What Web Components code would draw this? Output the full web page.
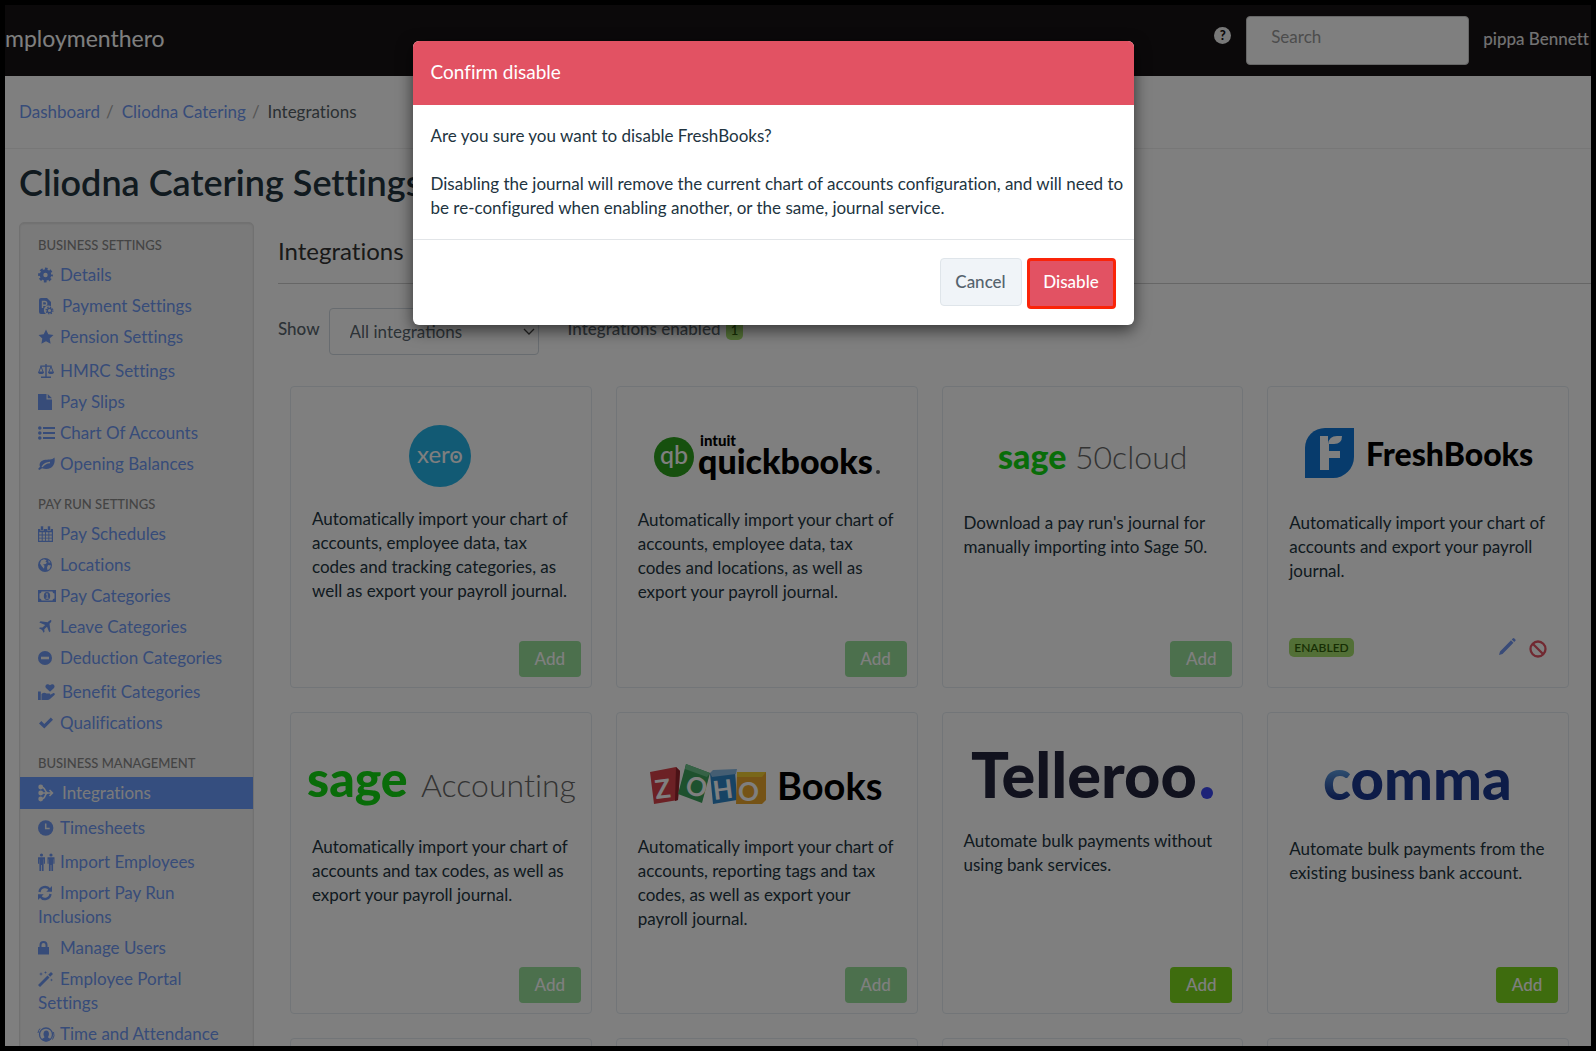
<!DOCTYPE html>
<html lang="en">
<head>
<meta charset="utf-8">
<title>Cliodna Catering Settings</title>
<style>
    html, body {
        height: 100%;
    }
    body {
        margin: 0;
        background: #000;
        overflow: hidden;
        font: 17px/24px Lato, "Liberation Sans", sans-serif;
        font-variant-ligatures: none;
        color: #22343f;
    }
</style>
</head>
<body>
<eh-shell>
    <eh-header slot="header" user="pippa Bennett"></eh-header>
    <eh-breadcrumb slot="breadcrumb">
        <a href="#dashboard">Dashboard</a>
        <a href="#business">Cliodna Catering</a>
        <span>Integrations</span>
    </eh-breadcrumb>
    <span slot="title">Cliodna Catering Settings</span>

    <eh-nav slot="nav">
        <eh-nav-group label="BUSINESS SETTINGS">
            <eh-nav-item icon="gear">Details</eh-nav-item>
            <eh-nav-item icon="payment" wide>Payment Settings</eh-nav-item>
            <eh-nav-item icon="star">Pension Settings</eh-nav-item>
            <eh-nav-item icon="scales" tall>HMRC Settings</eh-nav-item>
            <eh-nav-item icon="file">Pay Slips</eh-nav-item>
            <eh-nav-item icon="list">Chart Of Accounts</eh-nav-item>
            <eh-nav-item icon="leaf">Opening Balances</eh-nav-item>
        </eh-nav-group>
        <eh-nav-group label="PAY RUN SETTINGS">
            <eh-nav-item icon="calendar">Pay Schedules</eh-nav-item>
            <eh-nav-item icon="globe">Locations</eh-nav-item>
            <eh-nav-item icon="money">Pay Categories</eh-nav-item>
            <eh-nav-item icon="plane">Leave Categories</eh-nav-item>
            <eh-nav-item icon="minus">Deduction Categories</eh-nav-item>
            <eh-nav-item icon="benefit" wide tall>Benefit Categories</eh-nav-item>
            <eh-nav-item icon="check">Qualifications</eh-nav-item>
        </eh-nav-group>
        <eh-nav-group label="BUSINESS MANAGEMENT">
            <eh-nav-item icon="merge" wide active>Integrations</eh-nav-item>
            <eh-nav-item icon="clock" tall>Timesheets</eh-nav-item>
            <eh-nav-item icon="people" tall>Import Employees</eh-nav-item>
            <eh-nav-item icon="refresh">Import Pay Run Inclusions</eh-nav-item>
            <eh-nav-item icon="lock">Manage Users</eh-nav-item>
            <eh-nav-item icon="wand">Employee Portal Settings</eh-nav-item>
            <eh-nav-item icon="attendance">Time and Attendance</eh-nav-item>
        </eh-nav-group>
    </eh-nav>

    <eh-integrations enabled="1">
        <eh-card logo="xero" add="disabled">Automatically import your chart of accounts, employee data, tax codes and tracking categories, as well as export your payroll journal.</eh-card>
        <eh-card logo="quickbooks" add="disabled">Automatically import your chart of accounts, employee data, tax codes and locations, as well as export your payroll journal.</eh-card>
        <eh-card logo="sage50" add="disabled">Download a pay run's journal for manually importing into Sage 50.</eh-card>
        <eh-card logo="freshbooks">Automatically import your chart of accounts and export your payroll journal.</eh-card>
        <eh-card logo="sage" add="disabled">Automatically import your chart of accounts and tax codes, as well as export your payroll journal.</eh-card>
        <eh-card logo="zoho" add="disabled">Automatically import your chart of accounts, reporting tags and tax codes, as well as export your payroll journal.</eh-card>
        <eh-card logo="telleroo" add="on">Automate bulk payments without using bank services.</eh-card>
        <eh-card logo="comma" add="on">Automate bulk payments from the existing business bank account.</eh-card>
        <eh-card></eh-card>
        <eh-card></eh-card>
        <eh-card></eh-card>
        <eh-card></eh-card>
    </eh-integrations>

    <eh-modal slot="modal" heading="Confirm disable">
        <p>Are you sure you want to disable FreshBooks?</p>
        <p>Disabling the journal will remove the current chart of accounts configuration, and will need to be re-configured when enabling another, or the same, journal service.</p>
    </eh-modal>
</eh-shell>

<script>
// drawn on an 18x18 box, painted with the current text colour
const ICONS = {
    gear: `<circle cx="7.5" cy="8" r="4" fill="none" stroke="currentColor" stroke-width="3.6"/>
        <circle cx="7.5" cy="8" r="6.2" fill="none" stroke="currentColor" stroke-width="2.4" stroke-dasharray="2.7 2.17" stroke-dashoffset="1.35"/>`,
    payment: `<path d="M3 0h6l4 4v4.2a4.4 4.4 0 0 0-5 7.8H3a2 2 0 0 1-2-2V2a2 2 0 0 1 2-2z"/>
        <path d="M4.5 10V3.5h2.3a1.9 1.9 0 0 1 0 3.8H4.5" fill="none" stroke="#f5f5f5" stroke-width="1.4"/>
        <circle cx="11.5" cy="12.5" r="2.2" fill="none" stroke="currentColor" stroke-width="1.3"/>
        <circle cx="11.5" cy="12.5" r="3.4" fill="none" stroke="currentColor" stroke-width="1.2" stroke-dasharray="1.4 1.27"/>`,
    star: `<path d="M8 .5l2.3 4.8 5.2.7-3.8 3.6.9 5.2L8 12.3l-4.6 2.5.9-5.2L.5 6l5.2-.7z"/>`,
    scales: `<path d="M7.3 1h1.4v1.5h5V3.800H8.700v9.600H13V15H3v-1.600h4.300V3.800h-5V2.500h5z"/>
        <path d="M3 3.500L.8 9h4.400zM13 3.500L10.800 9h4.400z" fill="none" stroke="currentColor"/>
        <path d="M0 9h6a3 2 0 0 1-6 0zM10 9h6a3 2 0 0 1-6 0z"/>`,
    file: `<path d="M0 0h8.500v5.500H14V16H0zM9.700 0L14 4.300H9.700z"/>`,
    list: `<circle cx="1.800" cy="3" r="1.800"/><circle cx="1.800" cy="8" r="1.800"/><circle cx="1.800" cy="13" r="1.800"/>
        <path d="M5 2h12v2H5zM5 7h12v2H5zM5 12h12v2H5z"/>`,
    leaf: `<path d="M16.500 1.500c.8 4.500-.5 8.500-4 10.500-3 1.600-6 1.200-8.500.3L1.500 14 0 13l2-2.300C.8 7.500 2.500 4.800 6 4c4-.8 8 .2 10.500-2.500z"/>
        <path d="M4 11c2-3 4.500-4.300 8-4.500" fill="none" stroke="#f5f5f5" stroke-width="1.300"/>`,
    calendar: `<path d="M0 3h15v13H0z"/><path d="M2.500 0h3v4.500h-3zM9.500 0h3v4.500h-3z" stroke="#f5f5f5" stroke-width=".6"/>
        <path d="M1.200 6.200h2.500v2.300H1.200zM4.700 6.200h2.400v2.300H4.700zM8 6.200h2.400v2.300H8zM11.300 6.200h2.500v2.300h-2.500zM1.200 9.400h2.500v2.300H1.200zM4.700 9.400h2.400v2.300H4.700zM8 9.400h2.400v2.300H8zM11.300 9.400h2.500v2.300h-2.500zM1.200 12.600h2.500v2.200H1.200zM4.700 12.600h2.400v2.200H4.700zM8 12.600h2.400v2.200H8zM11.300 12.600h2.500v2.200h-2.500z" fill="#f5f5f5"/>`,
    globe: `<circle cx="7" cy="8" r="7"/>
        <path d="M3 3.500l3-1.300 2.500 1-1 1.600 1.500 1L7.500 7 5 7.500l1.500 1.300-.5 3-2-2.300-2-3zM10 8l3 .5-1.500 3.500-2 1.300L9 10.500zM10.500 3l2 2.500h-2z" fill="#f5f5f5"/>`,
    money: `<path d="M0 2h18v12H0z"/><path d="M3.500 3.500h11a2 2 0 0 0 2 2v5a2 2 0 0 0-2 2h-11a2 2 0 0 0-2-2v-5a2 2 0 0 0 2-2z" fill="#f5f5f5"/>
        <ellipse cx="9" cy="8" rx="3.200" ry="3.900"/><path d="M8 6.500l1.200-1v4.300M7.800 10.200h2.800" fill="none" stroke="#f5f5f5"/>`,
    plane: `<path d="M13.200 1.200c.6.900-.3 2.300-1.700 3.600l1 7.400-1.300 1L9 7.700 6.300 10.300l.2 2.500-.9.900-1.500-2.800L1 9.300l.9-.9 2.600.2L7.200 6 1.300 3.500l1.200-1.200 7.300 1c1.300-1.500 2.700-2.600 3.400-2.100z"/>`,
    minus: `<circle cx="7" cy="8" r="7"/><path d="M3 6.700h8v2.600H3z" fill="#f5f5f5"/>`,
    benefit: `<path d="M0 7.500h2.800V16H0zM3.500 10c1.500-1.300 3.500-1.500 5-.5h3c1 0 1 1.700 0 1.800H8.500h3l3.500-2c1.300-.7 2.500.8 1.500 1.800L12 15c-.8.700-1.500 1-2.500 1h-6z"/>
        <path d="M12 7.800L8 3.900C6 1.500 9.500-1.300 12 1.300c2.500-2.600 6 .2 4 2.600z"/>`,
    check: `<path d="M1 8.500L3.300 6l3 3L12.800 2.400 15 4.700 6.300 13.500z"/>`,
    merge: `<circle cx="2.700" cy="2" r="2.400"/><circle cx="2.700" cy="8" r="2.400"/><circle cx="2.700" cy="14" r="2.400"/>
        <path d="M3 2c5.500 0 3 6 7 6M3 14c5.500 0 3-6 7-6M3 8h11M11.500 5l3 3-3 3" fill="none" stroke="currentColor" stroke-width="1.500"/>`,
    clock: `<circle cx="7.700" cy="8" r="7.700"/><path d="M7.700 3.500V8.500h4" fill="none" stroke="#f5f5f5" stroke-width="1.500"/>`,
    people: `<circle cx="3.500" cy="1" r="1.600"/><circle cx="13" cy="1" r="1.600"/>
        <path d="M0 3.300h7v6.500H5.900V5.300h-.3V17H3.900v-6h-.8v6H1.400V5.300h-.3V9.800H0zM9.500 3.300h7v6.500h-1.100V5.300h-.3V17h-1.700v-6h-.8v6h-1.700V5.300h-.3V9.800H9.500z"/>`,
    refresh: `<path d="M1.500 7A5.600 5.600 0 0 1 11.700 4.500M12.500 9A5.600 5.600 0 0 1 2.300 11.500" fill="none" stroke="currentColor" stroke-width="2.300"/>
        <path d="M14 1v5.700H8.300zM0 15V9.300h5.700z"/>`,
    lock: `<path d="M0 7h11v7.500H0z"/><path d="M2.500 7.500V5a3 3 0 0 1 6 0v2.500" fill="none" stroke="currentColor" stroke-width="2"/>`,
    wand: `<path d="M0 14L9.500 4.500l2 2L2 16zM10.200 3.800L13 1l2 2-2.800 2.800z"/>
        <path d="M3 1l.5 1.500L5 3l-1.500.5L3 5l-.5-1.500L1 3l1.500-.5zM7.500 0l.4 1.100L9 1.500l-1.100.4L7.500 3l-.4-1.100L6 1.500l1.100-.4zM13.500 7.500l.4 1.100 1.100.4-1.100.4-.4 1.100-.4-1.100L12 9l1.100-.4z"/>`,
    attendance: `<circle cx="8" cy="8.500" r="6.500" fill="none" stroke="currentColor" stroke-width="1.300"/>
        <path d="M3.500 13.500c.5-1.500 3-1.200 3-2.500C5 9.500 5 4.500 8.300 4.500S11.500 9.500 10 11c0 1.300 2.500 1 3 2.500A6.500 6.500 0 0 1 3.500 13.500z"/>
        <path d="M0 7a8 8 0 0 1 2-4.500M15.500 6a8 8 0 0 1-1 7.500" fill="none" stroke="currentColor"/>`
};

// each logo: [height, markup], 258 wide
const LOGOS = {
    xero: [99, `<circle cx="128" cy="48" r="31" fill="#25b4e8"/>
        <text x="105" y="55" font-size="24" fill="#fff">xero</text><circle cx="144" cy="49" r="2" fill="#fff"/>`],
    quickbooks: [100, `<circle cx="36" cy="49" r="20" fill="#2ca01c"/>
        <text x="22" y="56" font-size="25" font-weight="500" fill="#fff">qb</text>
        <text x="62" y="38" font-size="15" font-weight="900">intuit</text>
        <text x="60" y="66" font-size="34" font-weight="900">quickbooks</text><circle cx="240" cy="64" r="2" fill="#555"/>`],
    sage50: [103, `<text x="34" y="61" font-size="34" font-weight="900" fill="#12d912">sage</text>
        <text x="111" y="61" font-size="32" font-weight="300" fill="#666">50cloud</text>`],
    freshbooks: [103, `<path d="M36 20h29v29a21 21 0 0 1-21 21H16V40a20 20 0 0 1 20-20z" fill="#0e76d8"/>
        <path d="M31 28h8v8q1-8 9-8h5q0 8-8 8h-5v7h11v7H40v12h-9z" fill="#fff"/>
        <text x="77" y="58" font-size="32" font-weight="900">FreshBooks</text>`],
    sage: [101, `<text x="-5" y="63" font-size="50" font-weight="900" fill="#12d912">sage</text>
        <text x="109" y="63" font-size="32" font-weight="300" fill="#666">Accounting</text>`],
    zoho: [101, `<path d="M12 38l26-5 4 4-2 29-24 4z" fill="#d8434a"/><path d="M38 33l4 4-2 29-3 1z" fill="#96242c"/>
        <path d="M48 30l24 9-8 30-24-9z" fill="#3da25d"/><path d="M48 30l24 9-3 4-22-8z" fill="#6cc58c"/>
        <path d="M72 39l25-3 2 30-24 4z" fill="#2e86c8"/><path d="M72 39l3-3 24-1-1 5-24 3z" fill="#8abce6"/>
        <path d="M99 38h29v28l-4 4H98z" fill="#eba62c"/><path d="M99 38h29l-4 5H99z" fill="#f2cf32"/>
        <g fill="#fff" font-size="26" font-weight="700"><text transform="rotate(-7 18 64)" x="18" y="65">Z</text><text transform="rotate(15 46 59)" x="46" y="59">O</text><text transform="rotate(-7 75 66)" x="76" y="66">H</text><text x="100" y="67">O</text></g>
        <text x="139" y="66" font-size="38" font-weight="700">Books</text>`],
    telleroo: [95, `<text x="7" y="64" font-size="63" font-weight="900" fill="#22243c">Telleroo</text><circle cx="243" cy="59" r="6" fill="#3a46f0"/>`],
    comma: [103, `<linearGradient id="c" x1="0" y1="0" x2="0" y2="1"><stop offset=".4" stop-color="#5a98dc"/><stop offset=".8" stop-color="#1a3890"/></linearGradient>
        <text x="34" y="66" font-size="58" font-weight="900" fill="#1a3890"><tspan fill="url(#c)">c</tspan>omma</text>`]
};

function icon(name, size = 18) {
    return `<svg width="${size}" height="${size}" viewBox="0 0 18 18" fill="currentColor" aria-hidden="true">${ICONS[name] || ''}</svg>`;
}

/** Shared base: renders once into an open shadow root */
class EhElement extends HTMLElement {
    connectedCallback() {
        if (this.shadowRoot) {
            return;
        }
        const template = document.createElement('template');
        template.innerHTML = this.render();
        this.attachShadow({ mode: 'open' });
        this.shadowRoot.appendChild(template.content.cloneNode(true));
    }
}

class Shell extends EhElement {
    render() {
        return `
            <style>
                :host {
                    display: block;
                    box-sizing: border-box;
                    height: 100vh;
                    border: 5px solid #000;
                    position: relative;
                    overflow: hidden;
                    background: #fff;
                }
                h1 {
                    margin: 11px 14px 18px;
                    font-size: 36px;
                    line-height: 44px;
                    font-weight: 600;
                }
                .columns {
                    display: grid;
                    grid-template-columns: 235px 1fr;
                    gap: 24px;
                    padding-left: 14px;
                }
            </style>
            <slot name="header"></slot>
            <slot name="breadcrumb"></slot>
            <h1><slot name="title"></slot></h1>
            <div class="columns">
                <slot name="nav"></slot>
                <main><slot></slot></main>
            </div>
            <slot name="modal"></slot>`;
    }
}

class Header extends EhElement {
    render() {
        return `
            <style>
                :host {
                    display: flex;
                    align-items: center;
                    height: 71px;
                    background: #161215;
                    color: #f0f0f0;
                }
                .brand {
                    flex: 1;
                    color: #fff;
                    font-size: 23px;
                    line-height: 32px;
                    padding-bottom: 6px;
                }
                .help {
                    width: 17px;
                    height: 17px;
                    padding: 0;
                    margin: 0 15px 10px;
                    border: 0;
                    border-radius: 50%;
                    background: #f0f0f0;
                    color: #161215;
                    font: 900 13px/17px Lato, sans-serif;
                }
                input {
                    box-sizing: border-box;
                    width: 223px;
                    height: 49px;
                    padding: 0 24px 8px;
                    border: 1px solid #ccc;
                    border-radius: 4px;
                    background: #fff;
                    font: 17px/24px Lato, sans-serif;
                }
                input::placeholder {
                    color: #999;
                }
                .user {
                    margin: 0 2px 4px 14px;
                    color: #e4e4e4;
                    text-decoration: none;
                    font-weight: 500;
                }
            </style>
            <div class="brand">mploymenthero</div>
            <button class="help" aria-label="Help">?</button>
            <input type="search" placeholder="Search" aria-label="Search">
            <a class="user" href="#account">${this.getAttribute('user')}</a>`;
    }
}

class Breadcrumb extends EhElement {
    render() {
        return `
            <style>
                :host {
                    display: flex;
                    padding: 24px 14px;
                    border-bottom: 1px solid #eee;
                }
                ::slotted(a) {
                    color: #6f98f2;
                    text-decoration: none;
                }
                ::slotted(a)::after {
                    content: "/";
                    color: #aaa;
                    padding: 0 8px 0 6px;
                }
                ::slotted(span) {
                    color: #555f66;
                }
            </style>
            <slot></slot>`;
    }
}

class Nav extends EhElement {
    render() {
        return `
            <style>
                :host {
                    display: block;
                    padding: 10px 0 30px;
                    background: #f5f5f5;
                    border: 1px solid #e3e3e3;
                    border-radius: 5px;
                    box-shadow: inset 0 1px 2px #ddd;
                }
            </style>
            <nav><slot></slot></nav>`;
    }
}

class NavGroup extends EhElement {
    render() {
        return `
            <style>
                :host {
                    display: block;
                    padding-bottom: 13px;
                }
                h3 {
                    margin: 0;
                    padding: 0 18px 2px;
                    font-size: 13px;
                    line-height: 24px;
                    font-weight: 500;
                    color: #888;
                }
            </style>
            <h3>${this.getAttribute('label')}</h3>
            <slot></slot>`;
    }
}

class NavItem extends EhElement {
    render() {
        return `
            <style>
                :host {
                    display: block;
                }
                :host([tall]) {
                    padding-top: 3px;
                }
                a {
                    display: block;
                    padding: 4px 18px 3px;
                    color: #6f98f2;
                    text-decoration: none;
                }
                svg {
                    display: inline-block;
                    vertical-align: -4px;
                    margin-right: 4px;
                    overflow: visible;
                }
                :host([wide]) svg {
                    margin-right: 6px;
                }
                :host([active]) a {
                    padding-bottom: 4px;
                    background: #6a9cff;
                    color: #f5f5f5;
                }
            </style>
            <a href="#${this.getAttribute('icon')}">${icon(this.getAttribute('icon'))}<slot></slot></a>`;
    }
}

class Integrations extends EhElement {
    render() {
        return `
            <style>
                :host {
                    display: block;
                }
                h2 {
                    margin: 0;
                    padding: 14px 0 17px;
                    border-bottom: 1px solid #ccc;
                    font-size: 24px;
                    line-height: 30px;
                    font-weight: 400;
                    color: #333;
                }
                .filter {
                    display: flex;
                    align-items: flex-start;
                    padding: 24px 0 31px;
                    color: #5a666e;
                }
                .filter > * {
                    font-weight: 500;
                }
                label, .enabled {
                    padding-top: 9px;
                }
                .select {
                    display: grid;
                    align-items: center;
                    width: 210px;
                    margin: 0 29px 0 9px;
                }
                select {
                    grid-area: 1 / 1;
                    appearance: none;
                    box-sizing: border-box;
                    width: 100%;
                    height: 47px;
                    padding: 0 20px;
                    border: 1px solid #d0d8e0;
                    border-radius: 4px;
                    background: #fff;
                    color: #5a666e;
                    font: 17px/24px Lato, sans-serif;
                }
                .select svg {
                    grid-area: 1 / 1;
                    justify-self: end;
                    margin-right: 4px;
                    pointer-events: none;
                }
                .badge {
                    display: inline-block;
                    margin-left: 1px;
                    padding: 0 5px;
                    border-radius: 5px;
                    background: #a5df6c;
                    color: #2e5c08;
                    font-size: 13px;
                    line-height: 20px;
                    font-weight: 600;
                }
                .cards {
                    display: grid;
                    grid-template-columns: repeat(4, 1fr);
                    gap: 24px;
                    padding: 0 22px 0 12px;
                }
            </style>
            <h2>Integrations</h2>
            <div class="filter">
                <label for="show">Show</label>
                <div class="select">
                    <select id="show"><option>All integrations</option></select>
                    <svg width="12" height="8" viewBox="0 0 12 8" fill="none" stroke="#444" stroke-width="1.3"><path d="M1 1l5 5 5-5"/></svg>
                </div>
                <div class="enabled">Integrations enabled <span class="badge">${this.getAttribute('enabled')}</span></div>
            </div>
            <div class="cards"><slot></slot></div>`;
    }
}

class Card extends EhElement {
    render() {
        const [height, art] = LOGOS[this.getAttribute('logo')] || [99, ''];
        const add = this.getAttribute('add');
        let actions = '';
        if (add) {
            actions = `<button class="add" ${add === 'disabled' ? 'disabled' : ''}>Add</button>`;
        } else if (art) {
            actions = `
                <span class="status">ENABLED</span>
                <button class="tool edit" aria-label="Edit"><svg width="18" height="18" viewBox="0 0 18 18" fill="#7397f0"><path d="M1 17l1-3.500L13 2.200l2.500 2.500L4.500 16zM13.700 1.500l1-1a1.200 1.200 0 0 1 1.700 0l.8.8a1.200 1.200 0 0 1 0 1.700l-1 1z"/></svg></button>
                <button class="tool" aria-label="Disable"><svg width="18" height="18" viewBox="0 0 18 18" fill="none" stroke="#e25263" stroke-width="2.300"><circle cx="9" cy="9" r="7.500"/><path d="M4 4l10 10"/></svg></button>`;
        }
        return `
            <style>
                :host {
                    display: flex;
                    flex-direction: column;
                    box-sizing: border-box;
                    aspect-ratio: 1;
                    padding: 21px 10px 10px 21px;
                    border: 1px solid #e4ebf1;
                    border-radius: 4px;
                    background: #fff;
                }
                .logo {
                    flex: none;
                    overflow: visible;
                    font-family: Lato, sans-serif;
                }
                .text {
                    flex: 1;
                    padding-right: 8px;
                }
                .actions {
                    display: flex;
                    align-items: center;
                    justify-content: flex-end;
                }
                .add {
                    width: 62px;
                    height: 36px;
                    padding: 0;
                    border: 0;
                    border-radius: 4px;
                    background: #7cd81c;
                    color: #fff;
                    font: 500 17px/24px Lato, sans-serif;
                }
                .add[disabled] {
                    background: #98e09a;
                }
                .status {
                    margin: 0 auto 20px 0;
                    padding: 0 5px;
                    border-radius: 5px;
                    background: #a5df6c;
                    color: #2e5c08;
                    font-size: 12px;
                    line-height: 19px;
                    font-weight: 600;
                }
                .tool {
                    height: 18px;
                    margin: 0 11px 16px 0;
                    padding: 0;
                    border: 0;
                    background: none;
                }
                .edit {
                    margin: 0 13px 20px 0;
                }
            </style>
            <svg class="logo" width="258" height="${height}" viewBox="0 0 258 ${height}">${art}</svg>
            <div class="text"><slot></slot></div>
            <div class="actions">${actions}</div>`;
    }
}

class Modal extends EhElement {
    render() {
        return `
            <style>
                :host {
                    position: absolute;
                    inset: 0;
                    display: flex;
                    justify-content: center;
                    align-items: flex-start;
                    padding: 36px 50px 0 0;
                    background: rgba(0, 0, 0, .5);
                }
                section {
                    width: 721px;
                    overflow: hidden;
                    border-radius: 6px;
                    background: #fff;
                    box-shadow: 0 5px 16px rgba(0, 0, 0, .6);
                }
                h2 {
                    margin: 0;
                    padding: 19px 18px 21px;
                    background: #e25263;
                    color: #fff;
                    font-size: 19px;
                    line-height: 24px;
                    font-weight: 400;
                }
                .body {
                    display: grid;
                    gap: 24px;
                    padding: 19px 4px 19px 18px;
                    border-bottom: 1px solid #e2e5e8;
                }
                ::slotted(p) {
                    margin: 0;
                }
                footer {
                    display: flex;
                    justify-content: flex-end;
                    align-items: flex-start;
                    gap: 5px;
                    padding: 18px 18px 16px;
                }
                button {
                    box-sizing: border-box;
                    width: 82px;
                    height: 48px;
                    padding: 0;
                    border: 1px solid #dfe5ea;
                    border-radius: 4px;
                    background: #f0f4f8;
                    color: #55636d;
                    font: 500 17px/24px Lato, sans-serif;
                }
                .danger {
                    width: 89px;
                    height: 51px;
                    padding-bottom: 3px;
                    border: 3px solid #fa2409;
                    background: #e25263;
                    color: #fff;
                }
            </style>
            <section role="dialog" aria-labelledby="heading">
                <h2 id="heading">${this.getAttribute('heading')}</h2>
                <div class="body"><slot></slot></div>
                <footer>
                    <button>Cancel</button>
                    <button class="danger">Disable</button>
                </footer>
            </section>`;
    }
}

customElements.define('eh-shell', Shell);
customElements.define('eh-header', Header);
customElements.define('eh-breadcrumb', Breadcrumb);
customElements.define('eh-nav', Nav);
customElements.define('eh-nav-group', NavGroup);
customElements.define('eh-nav-item', NavItem);
customElements.define('eh-integrations', Integrations);
customElements.define('eh-card', Card);
customElements.define('eh-modal', Modal);
</script>
</body>
</html>
